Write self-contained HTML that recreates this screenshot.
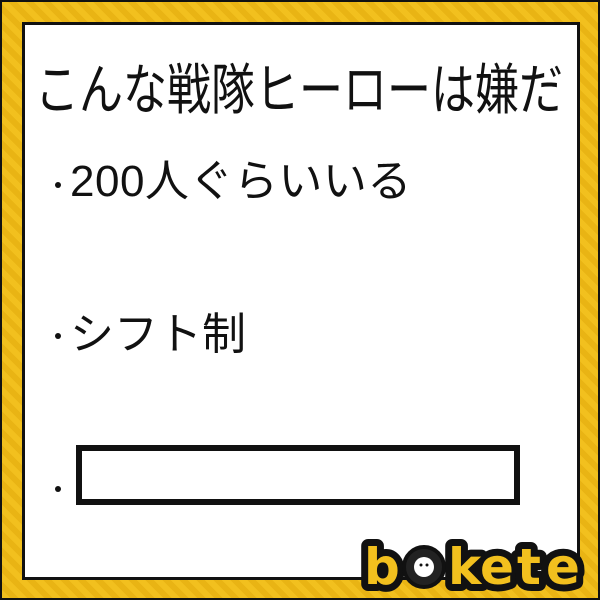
<!DOCTYPE html>
<html><head><meta charset="utf-8"><style>
body{margin:0;width:600px;height:600px;overflow:hidden;font-family:"Liberation Sans","Noto Sans CJK JP",sans-serif;}
.frame{position:absolute;left:0;top:0;width:600px;height:600px;box-sizing:border-box;border:2px solid #111;
background:repeating-linear-gradient(45deg,#f2c01e 0 6px,#e9b414 6px 12px);}
.inner{position:absolute;left:22px;top:22px;width:558px;height:558px;box-sizing:border-box;border:3px solid #111;background:#fff;}
.t{position:absolute;white-space:nowrap;color:#111;line-height:1;}
.box{position:absolute;left:76px;top:445px;width:444px;height:60px;box-sizing:border-box;border:6px solid #111;}
.d{position:absolute;width:6px;height:6px;border-radius:50%;background:#111;}
</style></head><body>
<div class="frame"></div>
<div class="inner"></div>
<div class="t" style="left:35px;top:64px;font-size:44px;transform:scaleY(1.25);transform-origin:0 0;">こんな戦隊ヒーローは嫌だ</div>
<div class="d" style="left:55px;top:182px"></div>
<div class="t" style="left:70px;top:160px;font-size:44px;letter-spacing:0.5px;">200人ぐらいいる</div>
<div class="d" style="left:55px;top:333px"></div>
<div class="t" style="left:70px;top:313px;font-size:44px;">シフト制</div>
<div class="d" style="left:55px;top:486px"></div>
<div class="box"></div>
<svg style="position:absolute;left:355px;top:528px" width="240" height="72" viewBox="355 528 240 72">
<g font-family="DejaVu Sans" font-weight="bold" font-size="50" stroke="#111" stroke-width="14" stroke-linejoin="round" fill="#111">
<text x="364" y="584">b</text><text x="448" y="584">k</text><text x="480" y="584">e</text><text x="517" y="584">t</text><text x="546" y="584">e</text></g>
<g font-family="DejaVu Sans" font-weight="bold" font-size="50" fill="#f2c01e">
<text x="364" y="584">b</text><text x="448" y="584">k</text><text x="480" y="584">e</text><text x="517" y="584">t</text><text x="546" y="584">e</text></g>
<circle cx="424" cy="567" r="20" fill="#222" stroke="#111" stroke-width="4"/><circle cx="424" cy="567" r="10" fill="#fff"/>
<circle cx="421" cy="565" r="1.5" fill="#111"/><circle cx="427" cy="565" r="1.5" fill="#111"/>
</svg>
</body></html>
